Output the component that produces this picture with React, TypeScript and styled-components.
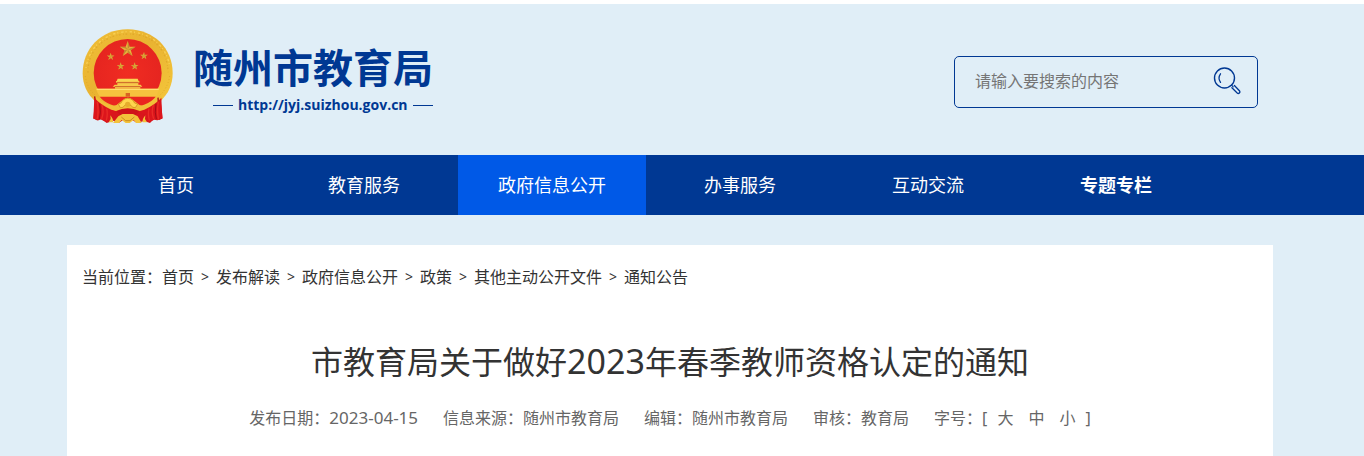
import React from "react";
import styled, { createGlobalStyle } from "styled-components";

const NAVY = "#003893";

const GlobalStyle = createGlobalStyle`
  * { box-sizing: border-box; }
  body {
    margin: 0;
    background: #e0eef7;
    color: #333;
    font: 16px/24px "Noto Sans", "Noto Sans CJK SC", sans-serif;
  }
  a { color: inherit; text-decoration: none; }
  button { font: inherit; color: inherit; background: none; border: 0; padding: 0; cursor: pointer; }
`;

const Page = styled.div`
  border-top: 4px solid #fff;
`;

const Band = styled.div<{ $fill?: string }>`
  padding-right: 24px;
  background: ${(p) => p.$fill ?? "transparent"};
`;

const Container = styled.div`
  max-width: 1206px;
  margin: 0 auto;
  padding: 0 15px;
`;

const HeaderRow = styled(Container)`
  display: flex;
  justify-content: space-between;
  align-items: flex-start;
  padding-top: 25px;
  padding-bottom: 31px;
`;

const Brand = styled.a`
  display: flex;
  gap: 19px;
  color: ${NAVY};
`;

const Emblem = styled.svg`
  width: 92px;
  height: 95px;
`;

const BrandText = styled.span`
  display: flex;
  flex-direction: column;
  padding-top: 13px;
  font-weight: 700;
`;

const SiteName = styled.span`
  font-size: 40px;
  line-height: 52px;
`;

const SiteUrl = styled.span`
  display: flex;
  align-items: center;
  gap: 5px;
  padding-left: 20px;
  font: 700 14px/22px "Open Sans", sans-serif;
  white-space: nowrap;
  &::before,
  &::after {
    content: "";
    width: 20px;
    height: 1px;
    background: ${NAVY};
  }
`;

const SearchForm = styled.form`
  display: flex;
  align-items: center;
  width: 304px;
  height: 52px;
  margin-top: 27px;
  padding: 0 16px 2px 20px;
  border: 1px solid ${NAVY};
  border-radius: 5px;
`;

const SearchInput = styled.input`
  flex: 1;
  min-width: 0;
  padding: 0;
  border: 0;
  outline: 0;
  background: transparent;
  font: inherit;
  &::placeholder { color: #757575; opacity: 1; }
`;

const SearchButton = styled.button`
  display: flex;
  color: ${NAVY};
`;

const NavList = styled(Container)`
  display: flex;
`;

const NavItem = styled.a<{ $active?: boolean; $bold?: boolean }>`
  flex: 0 1 188px;
  color: #fff;
  font-size: 18px;
  font-weight: ${(p) => (p.$bold ? 700 : 400)};
  line-height: 60px;
  text-align: center;
  white-space: nowrap;
  background: ${(p) => (p.$active ? "#0059e7" : "transparent")};
`;

const Panel = styled(Container)`
  margin-top: 30px;
  padding-top: 20px;
  padding-bottom: 40px;
  background: #fff;
`;

const Breadcrumb = styled.nav`
  display: flex;
  flex-wrap: wrap;
`;

const Separator = styled.span`
  width: 22px;
  font-size: 14px;
  text-align: center;
`;

const Title = styled.h1`
  margin: 48px 0 0;
  font-size: 32px;
  font-weight: 400;
  line-height: 48px;
  text-align: center;
`;

const Year = styled.span`
  font-size: 34px;
`;

const Meta = styled.div`
  display: flex;
  flex-wrap: wrap;
  justify-content: center;
  gap: 0 25px;
  margin-top: 20px;
  color: #666;
`;

const PublishDate = styled.time`
  font-size: 17px;
`;

const SizePicker = styled.span`
  display: flex;
`;

const SizeChoices = styled.span`
  display: flex;
  gap: 15px;
  padding: 0 10px;
`;

const STAR = "M0-10 2.4-3.2 9.5-3.1 3.8 1.2 5.9 8.1 0 4-5.9 8.1-3.8 1.2-9.5-3.1-2.4-3.2Z";

const stars = [
  { x: 173, y: 88, s: 2.5 },
  { x: 122, y: 110, s: 1.2 },
  { x: 222, y: 108, s: 1.2 },
  { x: 152, y: 139, s: 1.2 },
  { x: 194, y: 139, s: 1.2 },
];

function NationalEmblem() {
  return (
    <Emblem viewBox="36 27 276 285" aria-hidden="true">
      <defs>
        <linearGradient id="gold" x1="0" y1="0" x2="1" y2="1">
          <stop offset="0" stopColor="#f0bf37" />
          <stop offset=".45" stopColor="#e9b331" />
          <stop offset="1" stopColor="#f5c83c" />
        </linearGradient>
        <radialGradient id="field">
          <stop offset="0" stopColor="#f02c22" />
          <stop offset="1" stopColor="#e62520" />
        </radialGradient>
      </defs>
      <path d="M77 228 70 294Q81 307 94 297L110 309 130 302 146 309 173 291 201 309 222 303 240 309 251 298Q265 305 278 294L270 226Z" fill="#d8161c" />
      <path d="M174 28C92 27 38 88 38 160c0 34 14 64 37 83l41 22 58 2 57-2 40-22c24-20 37-50 37-83C308 84 251 29 174 28Z" fill="url(#gold)" />
      <path d="M54 158C52 94 99 43 174 42c73-1 119 46 120 115" fill="none" stroke="#d79c22" strokeWidth="4" strokeDasharray="5 8 2 5" opacity=".55" />
      <path d="M48 144C57 80 107 36 174 35c67 1 116 43 125 105" fill="none" stroke="#ffe06a" strokeWidth="4" strokeDasharray="3 9 7 6" opacity=".6" />
      <path d="M46 168q5 39 34 61M299 168q-6 39-33 61" fill="none" stroke="#d79c22" strokeWidth="3" strokeDasharray="3 6" opacity=".6" />
      <circle cx="173" cy="159" r="102" fill="url(#field)" />
      {stars.map((p) => (
        <g key={`${p.x}-${p.y}`} transform={`translate(${p.x} ${p.y}) scale(${p.s})`}>
          <path d={STAR} fill="#e9b43a" />
          <path d="M0 0V-10L2.4-3.2ZM0 0 9.5-3.1 3.8 1.2ZM0 0 5.9 8.1 0 4ZM0 0-5.9 8.1-3.8 1.2ZM0 0-9.5-3.1-2.4-3.2Z" fill="#a9702a" opacity=".6" />
        </g>
      ))}
      <path d="M143 176h60l4 10h-68Z" fill="#f9d653" />
      <path d="M138 183h70v5h-70ZM142 189h63v6h-63ZM134 194h78l5 6H128ZM135 201h76v5h-76Z" fill="#f7c94a" />
      <path d="M140 188h66M135 200h76" stroke="#b44a20" strokeWidth="2" />
      <path d="M78 206h190q-4 14-11 25H90q-8-12-12-25Z" fill="#f6c23e" />
      <path d="M80 208h186" stroke="#ffdf70" strokeWidth="4" />
      <path d="M89 230h168q-24 31-84 31-60 0-84-31Z" fill="#ea261f" />
      <path d="M167 219h13v11h-13Z" fill="#d96322" />
      <path d="M75 226q18 20 43 30 17 7 29-7l17-13q10-6 20 0l17 13q12 14 29 7 26-10 42-30l5 12q-16 22-42 31l-38 8q-22-11-45 0l-37-8q-27-9-45-31Z" fill="#f1bf38" />
      <path d="M74 229 82 300M264 233l5 65" stroke="#a90d17" strokeWidth="4" fill="none" />
      <path d="M73 233q17 20 51 36l24 7-25 7-16 22-19-9-18 1Z" fill="#dc151c" />
      <path d="M274 233q-17 20-51 36l-24 7 25 7 16 22 19-9 18 1Z" fill="#dc151c" />
      <path d="M82 246q5 31-1 53M96 255q7 21-1 41M110 266q4 15-1 36M265 246q-5 31 1 53M250 255q-7 21 1 41M237 266q-4 15 1 36" fill="none" stroke="#ea2c26" strokeWidth="4" />
      <path d="M89 251q5 28-1 46M258 251q-5 28 1 46" fill="none" stroke="#a50c15" strokeWidth="3" />
      <path d="M145 252q9 0 13-11 15-12 31 0 3 11 14 11l-7 11q-10 1-13-7-9-8-19 0-3 8-13 7Z" fill="#ffd64d" stroke="#c98419" strokeWidth="2" />
      <circle cx="173" cy="253" r="8" fill="#e6ac2c" />
      <path d="M138 273q35-17 71 0l-13 12q-23-11-45 0Z" fill="#cf1319" />
      <path d="M121 286q10 12 8 21h-13l6-10ZM226 286q-10 12-8 21h13l-6-10ZM145 289l13-7h31l14 7 12 20h-17l-7-9-12 9h-12l-12-9-8 9h-18Z" fill="#f3c23b" />
      <path d="m154 291 13 11h13l13-11" fill="none" stroke="#c98c20" strokeWidth="3" />
    </Emblem>
  );
}

function SearchIcon() {
  return (
    <svg width="28" height="28" viewBox="0 0 28 28" fill="none" stroke="currentColor" strokeLinecap="round" aria-hidden="true">
      <circle cx="11.5" cy="11" r="10" strokeWidth="1.4" />
      <path d="M7.5 6.8Q4.5 11 7.5 15.4" strokeWidth="1.3" />
      <path d="m18.6 18.2 1.6 1.6" strokeWidth="1.2" />
      <path d="m21.4 18.5 5 5.3c1.3 1.5-.7 3.5-2.2 2.2l-5.3-5.2" strokeWidth="1.3" />
    </svg>
  );
}

const navItems = [
  { label: "首页" },
  { label: "教育服务" },
  { label: "政府信息公开", active: true },
  { label: "办事服务" },
  { label: "互动交流" },
  { label: "专题专栏", bold: true },
];

const crumbs = ["首页", "发布解读", "政府信息公开", "政策", "其他主动公开文件", "通知公告"];

export default function App() {
  return (
    <Page lang="zh-CN">
      <GlobalStyle />
      <Band as="header">
        <HeaderRow>
          <Brand href="#">
            <NationalEmblem />
            <BrandText>
              <SiteName>随州市教育局</SiteName>
              <SiteUrl>http://jyj.suizhou.gov.cn</SiteUrl>
            </BrandText>
          </Brand>
          <SearchForm role="search" onSubmit={(e) => e.preventDefault()}>
            <SearchInput type="text" aria-label="搜索" placeholder="请输入要搜索的内容" />
            <SearchButton type="submit" aria-label="搜索">
              <SearchIcon />
            </SearchButton>
          </SearchForm>
        </HeaderRow>
      </Band>
      <Band as="nav" $fill={NAVY}>
        <NavList>
          {navItems.map((item) => (
            <NavItem key={item.label} href="#" $active={item.active} $bold={item.bold}>
              {item.label}
            </NavItem>
          ))}
        </NavList>
      </Band>
      <Band as="main">
        <Panel>
          <Breadcrumb>
            <span>当前位置：</span>
            {crumbs.map((name, i) => (
              <React.Fragment key={name}>
                {i > 0 && <Separator>&gt;</Separator>}
                <a href="#">{name}</a>
              </React.Fragment>
            ))}
          </Breadcrumb>
          <Title>
            市教育局关于做好<Year>2023</Year>年春季教师资格认定的通知
          </Title>
          <Meta>
            <span>
              发布日期：<PublishDate>2023-04-15</PublishDate>
            </span>
            <span>信息来源：随州市教育局</span>
            <span>编辑：随州市教育局</span>
            <span>审核：教育局</span>
            <SizePicker>
              字号：[
              <SizeChoices>
                <button type="button">大</button>
                <button type="button">中</button>
                <button type="button">小</button>
              </SizeChoices>
              ]
            </SizePicker>
          </Meta>
        </Panel>
      </Band>
    </Page>
  );
}
